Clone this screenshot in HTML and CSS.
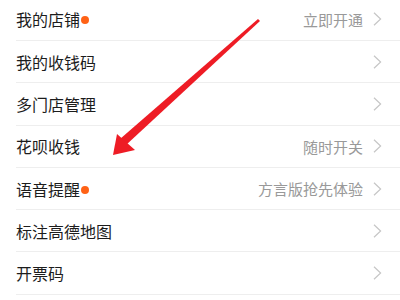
FILE: index.html
```html
<!DOCTYPE html>
<html>
<head>
<meta charset="utf-8">
<link rel="stylesheet" href="styles.css">
</head>
<body>
<div class="page">
  <ul class="list">
    <li class="row"><span class="label">我的店铺<i class="dot"></i></span><span class="extra">立即开通</span><svg class="chev" viewBox="0 0 9 14"><polyline points="1,0.8 7.6,7 1,13.2"/></svg></li>
    <li class="row"><span class="label">我的收钱码</span><span class="extra"></span><svg class="chev" viewBox="0 0 9 14"><polyline points="1,0.8 7.6,7 1,13.2"/></svg></li>
    <li class="row"><span class="label">多门店管理</span><span class="extra"></span><svg class="chev" viewBox="0 0 9 14"><polyline points="1,0.8 7.6,7 1,13.2"/></svg></li>
    <li class="row"><span class="label">花呗收钱</span><span class="extra">随时开关</span><svg class="chev" viewBox="0 0 9 14"><polyline points="1,0.8 7.6,7 1,13.2"/></svg></li>
    <li class="row"><span class="label">语音提醒<i class="dot"></i></span><span class="extra">方言版抢先体验</span><svg class="chev" viewBox="0 0 9 14"><polyline points="1,0.8 7.6,7 1,13.2"/></svg></li>
    <li class="row"><span class="label">标注高德地图</span><span class="extra"></span><svg class="chev" viewBox="0 0 9 14"><polyline points="1,0.8 7.6,7 1,13.2"/></svg></li>
    <li class="row"><span class="label">开票码</span><span class="extra"></span><svg class="chev" viewBox="0 0 9 14"><polyline points="1,0.8 7.6,7 1,13.2"/></svg></li>
  </ul>
  <svg class="arrow" width="400" height="300" viewBox="0 0 400 300">
    <polygon points="258,19 260,21 126,145 120,139" fill="#ee1c25"/>
    <polygon points="113,155 117,134 135,150" fill="#ee1c25"/>
  </svg>
</div>
</body>
</html>
```
FILE: styles.css
```css
html, body {
  margin: 0;
  padding: 0;
  background: #fff;
  overflow: hidden;
}
.page {
  position: relative;
  width: 400px;
  height: 300px;
  overflow: hidden;
  font-family: "Noto Sans CJK SC", "Noto Sans", sans-serif;
}
.list {
  list-style: none;
  margin: -1.3px 0 0 0;
  padding: 0 0 0 16px;
}
.row {
  display: flex;
  align-items: center;
  box-sizing: border-box;
  height: 42.3px;
  border-bottom: 1px solid #eeeeee;
  padding-right: 18px;
}
.label {
  flex: 1;
  display: flex;
  align-items: center;
  font-size: 16px;
  color: #1c1c1c;
}
.dot {
  display: inline-block;
  width: 8px;
  height: 8px;
  border-radius: 50%;
  background: #ff6216;
  margin-left: 1px;
  margin-top: 2px;
}
.extra {
  font-size: 15px;
  color: #999999;
  margin-right: 10px;
}
.chev {
  width: 9px;
  height: 14px;
  fill: none;
  stroke: #c6c6c6;
  stroke-width: 1.2;
}
.arrow {
  position: absolute;
  left: 0;
  top: 0;
  pointer-events: none;
}
```
